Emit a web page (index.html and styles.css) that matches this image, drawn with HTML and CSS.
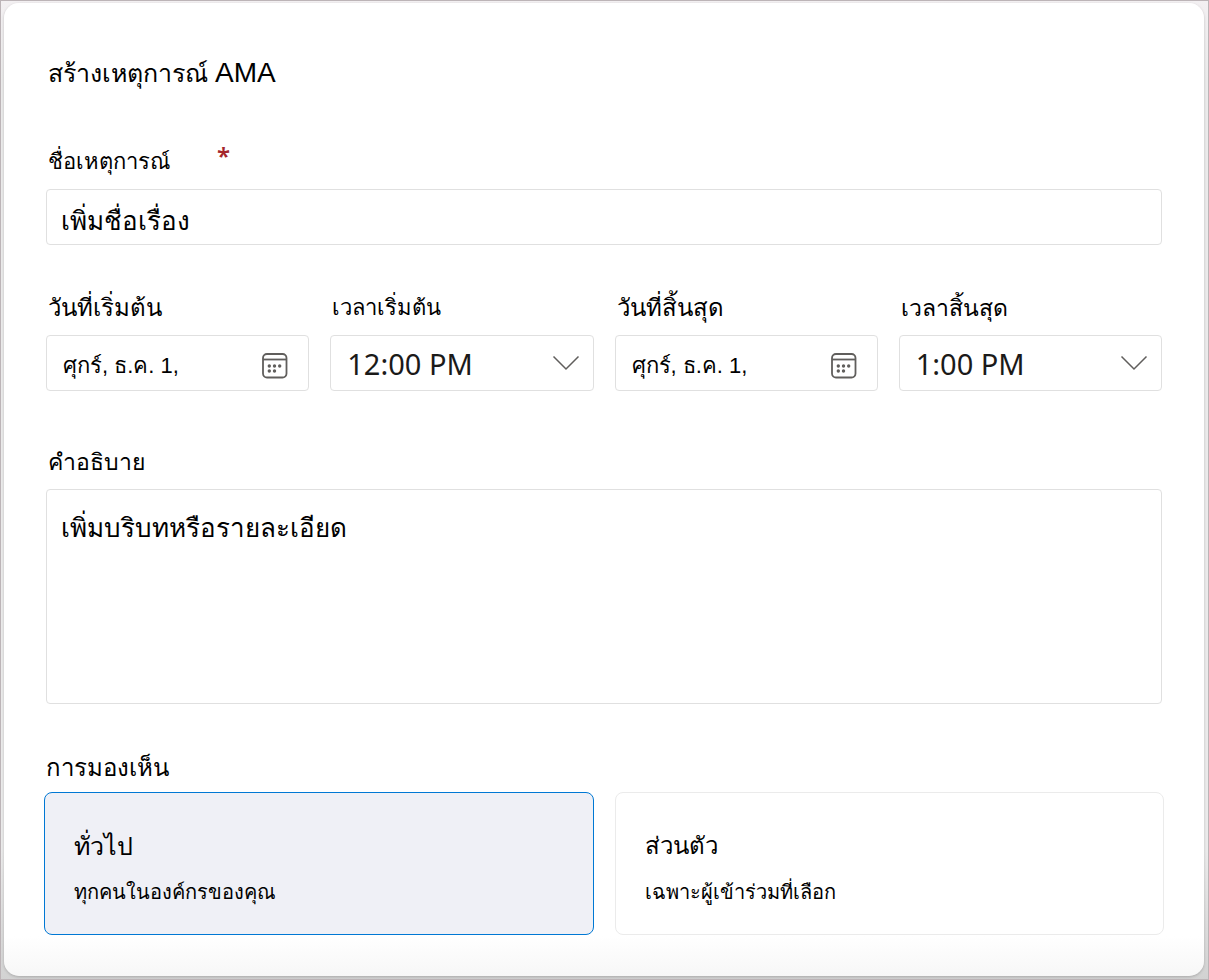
FILE: index.html
```
<!DOCTYPE html>
<html lang="th">
<head>
<meta charset="utf-8">
<meta name="viewport" content="width=device-width, initial-scale=1">
<title>สร้างเหตุการณ์ AMA</title>
<link rel="stylesheet" href="styles.css">
</head>
<body>
<main class="dialog">
  <form class="form">
    <h1 class="title">สร้างเหตุการณ์ <span class="title-latin">AMA</span></h1>

    <div class="field field-name">
      <label class="label label-small label-required" for="event-name">ชื่อเหตุการณ์<span class="required">*</span></label>
      <input class="control text-input" id="event-name" type="text" placeholder="เพิ่มชื่อเรื่อง" required>
    </div>

    <div class="schedule">
      <div class="field">
        <label class="label" for="start-date">วันที่เริ่มต้น</label>
        <div class="control picker">
          <input class="picker-value" id="start-date" type="text" value="ศุกร์, ธ.ค. 1,">
          <button class="picker-button" type="button" aria-label="วันที่เริ่มต้น">
            <svg class="calendar" viewBox="0 0 26 26" aria-hidden="true">
              <rect x="1" y="1" width="23.5" height="23.5" rx="4"/>
              <path d="M1 6.5h23.5"/>
              <g class="dots"><circle cx="7.3" cy="13" r="1.7"/><circle cx="12.5" cy="13" r="1.7"/><circle cx="17.7" cy="13" r="1.7"/><circle cx="7.3" cy="18" r="1.7"/><circle cx="12.5" cy="18" r="1.7"/></g>
            </svg>
          </button>
        </div>
      </div>
      <div class="field">
        <label class="label label-small" for="start-time">เวลาเริ่มต้น</label>
        <div class="select-box">
          <select class="control select" id="start-time"><option>12:00 PM</option></select>
          <svg class="chevron" viewBox="0 0 28 16" aria-hidden="true"><path d="M1.5 1.5L14 14L26.5 1.5"/></svg>
        </div>
      </div>
      <div class="field">
        <label class="label" for="end-date">วันที่สิ้นสุด</label>
        <div class="control picker">
          <input class="picker-value" id="end-date" type="text" value="ศุกร์, ธ.ค. 1,">
          <button class="picker-button" type="button" aria-label="วันที่สิ้นสุด">
            <svg class="calendar" viewBox="0 0 26 26" aria-hidden="true">
              <rect x="1" y="1" width="23.5" height="23.5" rx="4"/>
              <path d="M1 6.5h23.5"/>
              <g class="dots"><circle cx="7.3" cy="13" r="1.7"/><circle cx="12.5" cy="13" r="1.7"/><circle cx="17.7" cy="13" r="1.7"/><circle cx="7.3" cy="18" r="1.7"/><circle cx="12.5" cy="18" r="1.7"/></g>
            </svg>
          </button>
        </div>
      </div>
      <div class="field">
        <label class="label label-medium" for="end-time">เวลาสิ้นสุด</label>
        <div class="select-box">
          <select class="control select" id="end-time"><option>1:00 PM</option></select>
          <svg class="chevron" viewBox="0 0 28 16" aria-hidden="true"><path d="M1.5 1.5L14 14L26.5 1.5"/></svg>
        </div>
      </div>
    </div>

    <div class="field field-description">
      <label class="label label-medium" for="description">คำอธิบาย</label>
      <textarea class="control textarea" id="description" placeholder="เพิ่มบริบทหรือรายละเอียด"></textarea>
    </div>

    <fieldset class="visibility">
      <legend class="label visibility-label">การมองเห็น</legend>
      <div class="options">
        <div class="option">
          <input class="option-radio" type="radio" name="visibility" id="public" checked>
          <label class="option-text" for="public"><span class="option-name option-name-large">ทั่วไป</span><span class="option-note">ทุกคนในองค์กรของคุณ</span></label>
        </div>
        <div class="option">
          <input class="option-radio" type="radio" name="visibility" id="private">
          <label class="option-text" for="private"><span class="option-name">ส่วนตัว</span><span class="option-note">เฉพาะผู้เข้าร่วมที่เลือก</span></label>
        </div>
      </div>
    </fieldset>
  </form>
</main>
</body>
</html>
```

FILE: styles.css
```
* {
  box-sizing: border-box;
}

body {
  margin: 0;
  min-height: 100vh;
  padding: 2px 4px 3px 3px;
  display: flex;
  border: 1px solid #bcb4b7;
  background: linear-gradient(#f3f0f2, #ebebeb 80px, #ebebeb 850px, #d2d2d2);
  color: #000;
  font-family: "Liberation Sans", "Noto Sans", sans-serif;
}

.dialog {
  flex: 1;
  min-width: 0;
  padding: 50px 42px 41px;
  border-radius: 15px;
  background: linear-gradient(to top, #f7f7f7, #fff 40px);
  box-shadow: 0 1px 3px rgba(0, 0, 0, 0.2);
}

.form {
  display: flex;
  flex-direction: column;
}

.title {
  margin: 0 0 55px;
  padding-left: 2px;
  font-size: 25px;
  font-weight: 400;
  line-height: 40px;
}

.title-latin {
  font-size: 28px;
}

.field {
  display: flex;
  flex-direction: column;
  gap: 13px;
  min-width: 0;
}

.label {
  padding-left: 2px;
  font-size: 24px;
  line-height: 28px;
}

.label-small {
  font-size: 22px;
}

.label-medium {
  font-size: 23px;
}

.label-required {
  display: flex;
  gap: 47px;
}

.required {
  color: #a4262c;
  font-family: "Noto Sans", sans-serif;
  font-size: 24px;
  font-weight: 600;
  line-height: 16px;
}

.control {
  width: 100%;
  height: 56px;
  border: 1px solid #e0e0e0;
  border-radius: 4px;
  background: #fff;
  color: #000;
  font-family: inherit;
}

.text-input,
.textarea {
  padding: 8px 14px 0;
  font-size: 26px;
}

.text-input::placeholder,
.textarea::placeholder {
  color: #000;
  opacity: 1;
}

.schedule {
  display: grid;
  grid-template-columns: repeat(4, minmax(0, 1fr));
  gap: 21px;
  margin: 49px 0 57px;
}

.picker {
  display: flex;
  align-items: center;
  padding: 5px 20px 0 16px;
}

.picker-value {
  flex: 1;
  min-width: 0;
  padding: 0;
  border: 0;
  background: none;
  color: #000;
  font-family: inherit;
  font-size: 22px;
}

.picker-button {
  display: flex;
  padding: 0;
  border: 0;
  background: none;
}

.calendar {
  width: 26px;
  height: 26px;
  fill: none;
  stroke: #605e5c;
  stroke-width: 1.8;
}

.dots {
  fill: #605e5c;
  stroke: none;
}

.select-box {
  display: grid;
  align-items: center;
}

.select {
  grid-area: 1 / 1;
  padding: 0 16px;
  appearance: none;
  color: #1b1a19;
  font-family: "Noto Sans", sans-serif;
  font-size: 29px;
}

.chevron {
  grid-area: 1 / 1;
  justify-self: end;
  width: 28px;
  height: 16px;
  margin-right: 14px;
  fill: none;
  stroke: #605e5c;
  stroke-width: 1.5;
  pointer-events: none;
}

.textarea {
  display: block;
  height: 215px;
  padding-top: 20px;
  line-height: 36px;
  resize: none;
}

.visibility {
  min-width: 0;
  margin: 50px -2px 0;
  padding: 0;
  border: 0;
}

.visibility-label {
  margin-bottom: 10px;
}

.options {
  display: grid;
  grid-template-columns: repeat(2, minmax(0, 1fr));
  gap: 21px;
}

.option {
  display: grid;
}

.option-radio {
  grid-area: 1 / 1;
  margin: 0;
  appearance: none;
  border: 1px solid #ebebeb;
  border-radius: 8px;
}

.option-radio:checked {
  border-color: #0078d4;
  background: #eff0f6;
}

.option-text {
  grid-area: 1 / 1;
  z-index: 1;
  display: flex;
  flex-direction: column;
  gap: 12px;
  padding: 36px 30px 27px;
}

.option-name {
  font-size: 24px;
  line-height: 36px;
}

.option-name-large {
  font-size: 25px;
}

.option-note {
  font-size: 20px;
  line-height: 32px;
}
```
